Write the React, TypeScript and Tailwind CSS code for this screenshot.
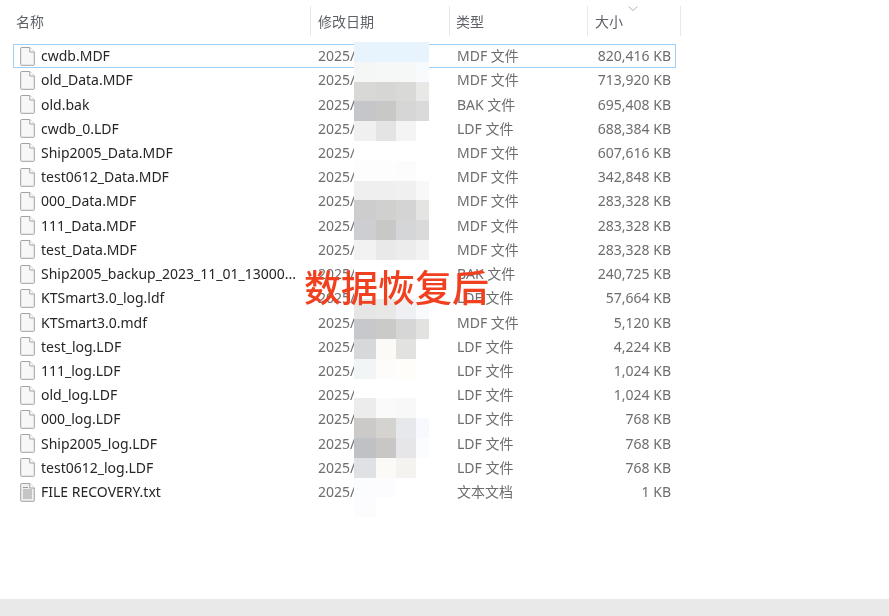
import React from 'react';

const files = [
  { name: 'cwdb.MDF', type: 'MDF 文件', size: '820,416 KB' },
  { name: 'old_Data.MDF', type: 'MDF 文件', size: '713,920 KB' },
  { name: 'old.bak', type: 'BAK 文件', size: '695,408 KB' },
  { name: 'cwdb_0.LDF', type: 'LDF 文件', size: '688,384 KB' },
  { name: 'Ship2005_Data.MDF', type: 'MDF 文件', size: '607,616 KB' },
  { name: 'test0612_Data.MDF', type: 'MDF 文件', size: '342,848 KB' },
  { name: '000_Data.MDF', type: 'MDF 文件', size: '283,328 KB' },
  { name: '111_Data.MDF', type: 'MDF 文件', size: '283,328 KB' },
  { name: 'test_Data.MDF', type: 'MDF 文件', size: '283,328 KB' },
  { name: 'Ship2005_backup_2023_11_01_13000...', type: 'BAK 文件', size: '240,725 KB' },
  { name: 'KTSmart3.0_log.ldf', type: 'LDF 文件', size: '57,664 KB' },
  { name: 'KTSmart3.0.mdf', type: 'MDF 文件', size: '5,120 KB' },
  { name: 'test_log.LDF', type: 'LDF 文件', size: '4,224 KB' },
  { name: '111_log.LDF', type: 'LDF 文件', size: '1,024 KB' },
  { name: 'old_log.LDF', type: 'LDF 文件', size: '1,024 KB' },
  { name: '000_log.LDF', type: 'LDF 文件', size: '768 KB' },
  { name: 'Ship2005_log.LDF', type: 'LDF 文件', size: '768 KB' },
  { name: 'test0612_log.LDF', type: 'LDF 文件', size: '768 KB' },
  { name: 'FILE RECOVERY.txt', type: '文本文档', size: '1 KB' },
];

// blurred-out date cells, one row per 19.8px step
const W = '#ffffff';
const mosaic = [
  ['#e8f4fd', '#e8f4fd', '#e8f4fd', '#e8f4fd'],
  ['#f5f6f6', '#f6f7f7', '#f6f8f8', '#f8fbfd'],
  ['#d8d8d6', '#d6d6d4', '#d9d9d7', '#e8e8e6'],
  ['#c4c6c9', '#c8c8c6', '#d6d6d6', '#dadada'],
  ['#f0f0f0', '#e4e4e4', '#f4f4f4', W],
  [W, W, W, W],
  ['#fdfdfd', '#fdfdfd', '#fcfcfc', W],
  ['#efefef', '#efefef', '#f0f0f0', '#f8f8f8'],
  ['#cdcdcd', '#d0d0ce', '#d4d4d4', '#e4e4e2'],
  ['#ccced1', '#c8c8c6', '#d5d6d7', '#dadada'],
  ['#f2f2f3', '#e9e9e9', '#ececec', '#f2f2f2'],
  [W, W, W, W],
  [W, W, W, W],
  ['#e6e6e6', '#e8e8e6', '#eef0f4', '#f8fafd'],
  ['#c6c8cc', '#cacac8', '#d6d6d6', '#e2e2e0'],
  ['#d6d8da', '#fbfaf7', '#e2e2e0', W],
  ['#f2f5f5', '#fdfcfa', '#fefdfa', W],
  [W, W, W, W],
  ['#ececec', '#fafafa', '#f8f8f8', W],
  ['#cccac8', '#d4d3cf', '#e6e8ec', '#f6f9fd'],
  ['#bfc1c5', '#c8c7c5', '#e6e6e8', '#fbfcfe'],
  ['#dfe1e4', '#fbfaf7', '#f4f3f0', W],
  ['#fbfcfe', '#fcfcfe', W, W],
  ['#fcfcfe', W, W, W],
];

function FileIcon({ text }: { text: boolean }) {
  return (
    <svg width="15" height="19" viewBox="0 0 15 19" className="shrink-0">
      <path d="M0.7 1.2 a0.7 0.7 0 0 1 .7-.7 H9.8 L14.3 5 V17.6 a0.7 0.7 0 0 1-.7.7 H1.4 a0.7 0.7 0 0 1-.7-.7 Z" fill={text ? '#efefef' : '#f7f7f7'} stroke="#a2a2a2" strokeWidth="1" />
      <path d="M9.8 .5 V5 H14.3" fill="#ffffff" stroke="#a2a2a2" strokeWidth="1" />
      {text && <path d="M3 4.5 H8 M3 7 H12 M3 9 H12 M3 11 H12 M3 13 H12 M3 15 H12" stroke="#9a9a9a" strokeWidth="1" />}
    </svg>
  );
}

export default function App() {
  return <div className="relative w-[889px] h-[616px] overflow-hidden bg-white flex flex-col font-['Noto_Sans','Noto_Sans_CJK_SC',sans-serif] text-[14px]">
      <div className="flex-1 pl-[13px] pt-[6px] blur-[0.35px]">
        {/* Column headers */}
        <div className="flex h-[30px] items-center text-[14px] text-[#5f6368]">
          <div className="w-[298px] h-full flex items-center pl-[3px] border-r border-[#e8e8e8]">名称</div>
          <div className="w-[139px] h-full flex items-center pl-[7px] border-r border-[#e8e8e8]">修改日期</div>
          <div className="w-[138px] h-full flex items-center pl-[6px] border-r border-[#e8e8e8]">类型</div>
          <div className="relative w-[93px] h-full flex items-center pl-[7px] border-r border-[#e8e8e8]">
            大小
            <svg width="10" height="6" viewBox="0 0 10 6" className="absolute left-[40px] top-[0px]">
              <path d="M0.5 0.5 L5 4.5 L9.5 0.5" fill="none" stroke="#b4b4b4" strokeWidth="1" />
            </svg>
          </div>
        </div>
        {/* File rows */}
        <div className="mt-[8px] w-[663px]">
          {files.map((f, i) => <div key={f.name} className={`flex items-center h-[24.22px] ${i === 0 ? 'border border-[#9fcff5]' : 'border border-transparent'}`}>
              <div className="w-[297px] flex items-center gap-[6px] pl-[6px] shrink-0 text-[#262626]">
                <FileIcon text={f.name.endsWith('.txt')} />
                <span className="whitespace-nowrap pb-[1px]">{f.name}</span>
              </div>
              <div className="w-[139px] pl-[7px] pb-[1px] shrink-0 text-[#6d6d6d]">2025/</div>
              <div className="w-[139px] pl-[7px] pb-[1px] shrink-0 text-[#6d6d6d] whitespace-nowrap">{f.type}</div>
              <div className="flex-1 text-right pr-[4px] pb-[1px] text-[#6d6d6d] whitespace-nowrap">{f.size}</div>
            </div>)}
        </div>
      </div>

      {/* Bottom bar */}
      <div className="h-[17px] bg-[#e9e9e9]" />

      {/* Privacy mosaic over the date column */}
      <div className="absolute left-[354px] top-[42px] w-[75px] blur-[0.6px]">
        {mosaic.map((row, r) => <div key={r} className="grid grid-cols-[22px_20px_20px_13px] h-[19.8px]">
            {row.map((c, k) => <div key={k} style={{ backgroundColor: c }} />)}
          </div>)}
      </div>

      {/* Caption stamped over the list */}
      <div className="absolute left-[304px] top-[260px] text-[37px] font-medium leading-[52px] text-[#f0401f] whitespace-nowrap font-['Noto_Sans_CJK_SC',sans-serif] blur-[0.3px]">
        数据恢复后
      </div>
    </div>;
}
